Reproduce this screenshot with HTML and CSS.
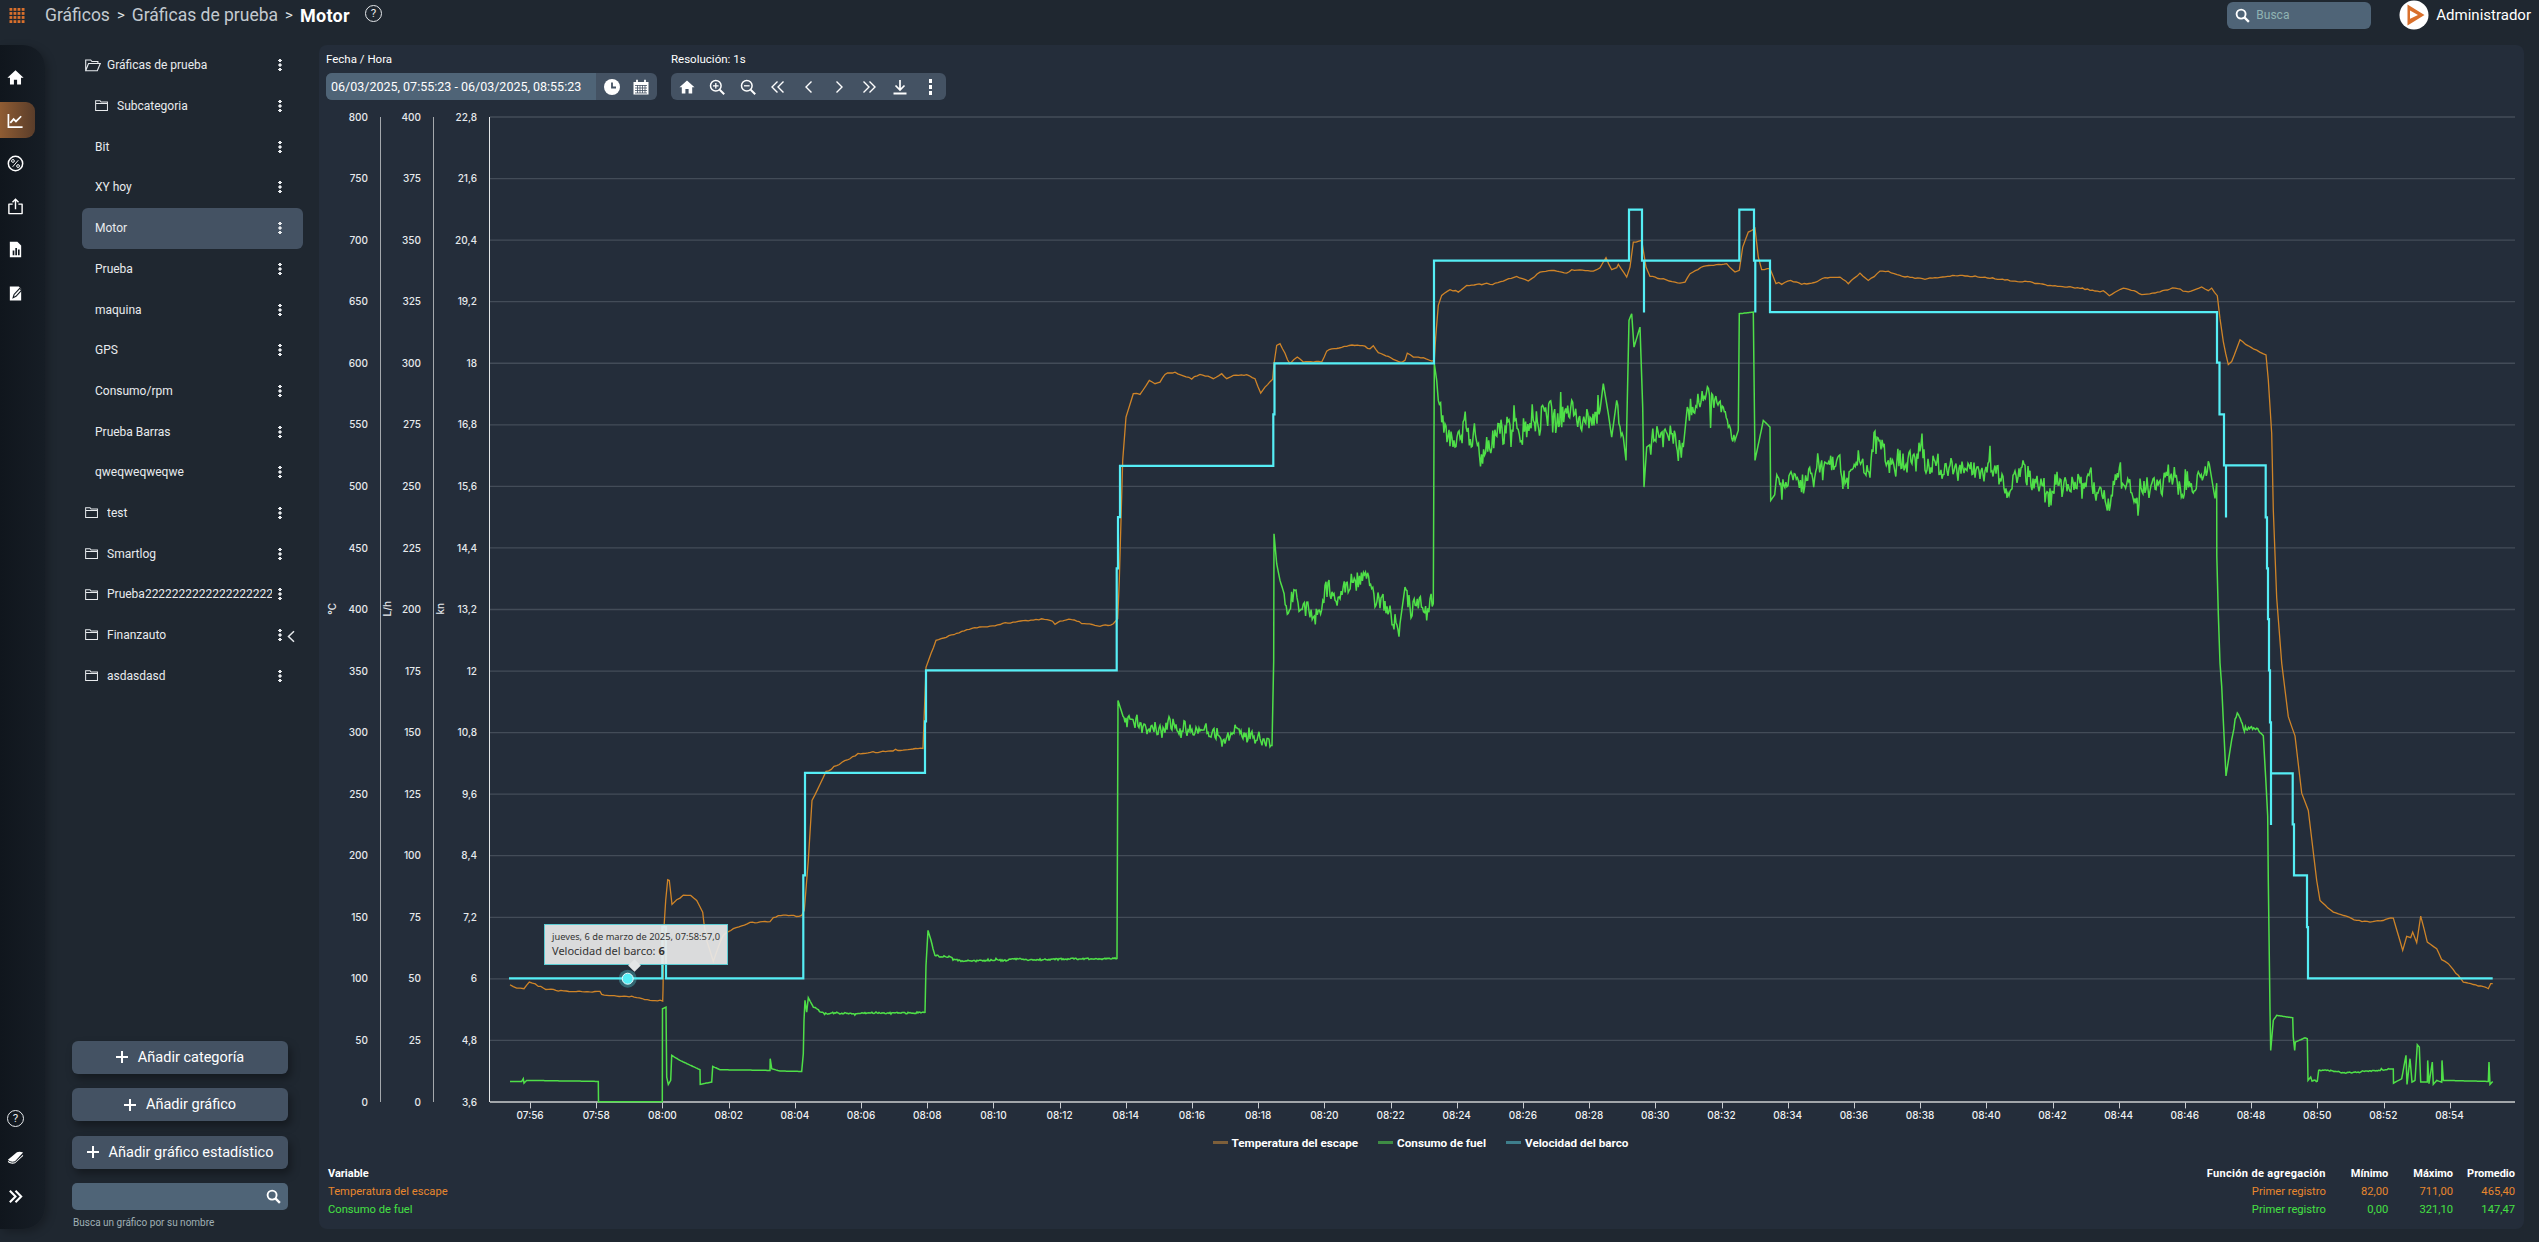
FILE: index.html
```html
<!DOCTYPE html>
<html lang="es">
<head>
<meta charset="utf-8">
<title>Motor</title>
<link rel="stylesheet" href="styles.css">
</head>
<body>
<header class="topbar">
  <svg class="apps" viewBox="0 0 16 16"><g fill="#d9702c"><rect x="0" y="0" width="3" height="3"/><rect x="4.3" y="0" width="3" height="3"/><rect x="8.6" y="0" width="3" height="3"/><rect x="13" y="0" width="3" height="3"/><rect x="0" y="4.3" width="3" height="3"/><rect x="4.3" y="4.3" width="3" height="3"/><rect x="8.6" y="4.3" width="3" height="3"/><rect x="13" y="4.3" width="3" height="3"/><rect x="0" y="8.6" width="3" height="3"/><rect x="4.3" y="8.6" width="3" height="3"/><rect x="8.6" y="8.6" width="3" height="3"/><rect x="13" y="8.6" width="3" height="3"/><rect x="0" y="13" width="3" height="3"/><rect x="4.3" y="13" width="3" height="3"/><rect x="8.6" y="13" width="3" height="3"/><rect x="13" y="13" width="3" height="3"/></g></svg>
  <nav class="crumbs">
    <span>Gráficos</span><span class="sep">&gt;</span><span>Gráficas de prueba</span><span class="sep">&gt;</span><strong>Motor</strong>
    <span class="help help-top">?</span>
  </nav>
  <div class="top-search">
    <svg class="ico-search" viewBox="0 0 16 16"><circle cx="6.5" cy="6.5" r="4.8" fill="none" stroke="#fff" stroke-width="2"/><path d="M10 10l4.8 4.8" stroke="#fff" stroke-width="2.4"/></svg>
    <span>Busca</span>
  </div>
  <svg class="logo" viewBox="0 0 30 30"><circle cx="15" cy="15" r="14.5" fill="#fff"/><path d="M8.5 4.5 L25.5 15 L8.5 25.5 V20 L19 15 L11 10.5 V19 L8.5 20 Z" fill="#d9702c"/></svg>
  <span class="user">Administrador</span>
</header>

<main class="layout">
  <aside class="rail">
    <div class="rail-group">
      <a class="rail-item"><svg viewBox="0 0 16 16"><path d="M8 1.2L.4 8.3h2.4v6.3h3.7V10.100h3v4.500h3.700V8.300h2.400z" fill="#fff"/></svg></a>
      <a class="rail-item active"><svg viewBox="0 0 18 18"><path d="M1.500 2v14h15" fill="none" stroke="#fff" stroke-width="1.800"/><path d="M3.500 11.500l3.500-4 2.500 2.500 5.500-5.500" fill="none" stroke="#fff" stroke-width="1.800"/></svg></a>
      <a class="rail-item"><svg viewBox="0 0 18 18"><circle cx="9" cy="9" r="7.600" fill="none" stroke="#fff" stroke-width="1.600"/><path d="M12 5.500l-6 7" stroke="#fff" stroke-width="1"/><circle cx="6.300" cy="6.300" r="1.500" fill="none" stroke="#fff"/><circle cx="11.700" cy="11.700" r="1.500" fill="none" stroke="#fff"/></svg></a>
      <a class="rail-item"><svg viewBox="0 0 18 18"><path d="M6 6.500H2v10h14v-10h-4" fill="none" stroke="#fff" stroke-width="1.500" stroke-linejoin="round"/><path d="M9 12V1.500M5.800 4.500L9 1.300l3.200 3.200" fill="none" stroke="#fff" stroke-width="1.500"/></svg></a>
      <a class="rail-item"><svg viewBox="0 0 18 18"><path d="M3 .8h8l4 4v12.400H3z" fill="#fff"/><path d="M6 10h1.800v5H6zM8.800 7.500h1.800V15H8.800zM11.600 9h1.800v6h-1.800z" fill="#141b22"/></svg></a>
      <a class="rail-item"><svg viewBox="0 0 18 18"><path d="M3 1.500h9.500l2.500 2.500v12.500H3z" fill="#fff"/><path d="M6.500 13.500l1-3.500 6-6.500 2 2-6 6.500zM14 1l2.500 2.500" fill="#fff" stroke="#141b22" stroke-width="1.200"/></svg></a>
    </div>
    <div class="rail-group rail-bottom">
      <a class="rail-item"><span class="help help-rail">?</span></a>
      <a class="rail-item"><svg viewBox="0 0 18 18"><path d="M1 11.500L10.500 3.500c1.500-.8 4-.8 6.500.2L8.500 13c-2.500 1-5.500.5-7.500-1.500z" fill="#fff"/><path d="M1 12.500c2 2 5 2.300 7.500 1.500L17 6v1.300L8.500 15c-2.500 1-5.500.5-7.500-1.300z" fill="#fff"/></svg></a>
      <a class="rail-item"><svg viewBox="0 0 18 18"><path d="M3 3l6 6-6 6M9 3l6 6-6 6" fill="none" stroke="#fff" stroke-width="2.200"/></svg></a>
    </div>
  </aside>

  <aside class="sidebar">
    <ul class="tree">
      <li class="row folder"><svg class="folder-ico" viewBox="0 0 16 13"><path d="M.7 11.800V1h5l1.200 1.500h6v2M.7 11.800h11.600l3-7.300H3.500z" fill="none" stroke="#e8ebee" stroke-width="1.100"/></svg><span class="name">Gráficas de prueba</span><span class="dots"></span></li>
      <li class="row sub"><svg class="folder-ico" viewBox="0 0 14 12"><path d="M.6 11.400V.8h4.800l1.100 1.400h7v9.200zM.6 3.800h12.800" fill="none" stroke="#e8ebee" stroke-width="1.100"/></svg><span class="name">Subcategoria</span><span class="dots"></span></li>
      <li class="row"><span class="name">Bit</span><span class="dots"></span></li>
      <li class="row"><span class="name">XY hoy</span><span class="dots"></span></li>
      <li class="row selected"><span class="name">Motor</span><span class="dots"></span></li>
      <li class="row"><span class="name">Prueba</span><span class="dots"></span></li>
      <li class="row"><span class="name">maquina</span><span class="dots"></span></li>
      <li class="row"><span class="name">GPS</span><span class="dots"></span></li>
      <li class="row"><span class="name">Consumo/rpm</span><span class="dots"></span></li>
      <li class="row"><span class="name">Prueba Barras</span><span class="dots"></span></li>
      <li class="row"><span class="name">qweqweqweqwe</span><span class="dots"></span></li>
      <li class="row folder"><svg class="folder-ico" viewBox="0 0 14 12"><path d="M.6 11.400V.8h4.800l1.100 1.400h7v9.200zM.6 3.800h12.800" fill="none" stroke="#e8ebee" stroke-width="1.100"/></svg><span class="name">test</span><span class="dots"></span></li>
      <li class="row folder"><svg class="folder-ico" viewBox="0 0 14 12"><path d="M.6 11.400V.8h4.800l1.100 1.400h7v9.200zM.6 3.800h12.800" fill="none" stroke="#e8ebee" stroke-width="1.100"/></svg><span class="name">Smartlog</span><span class="dots"></span></li>
      <li class="row folder"><svg class="folder-ico" viewBox="0 0 14 12"><path d="M.6 11.400V.8h4.800l1.100 1.400h7v9.200zM.6 3.800h12.800" fill="none" stroke="#e8ebee" stroke-width="1.100"/></svg><span class="name">Prueba2222222222222222222222222</span><span class="dots"></span></li>
      <li class="row folder"><svg class="folder-ico" viewBox="0 0 14 12"><path d="M.6 11.400V.8h4.800l1.100 1.400h7v9.200zM.6 3.800h12.800" fill="none" stroke="#e8ebee" stroke-width="1.100"/></svg><span class="name">Finanzauto</span><span class="dots"></span></li>
      <li class="row folder"><svg class="folder-ico" viewBox="0 0 14 12"><path d="M.6 11.400V.8h4.800l1.100 1.400h7v9.200zM.6 3.800h12.800" fill="none" stroke="#e8ebee" stroke-width="1.100"/></svg><span class="name">asdasdasd</span><span class="dots"></span></li>
    </ul>
    <svg class="collapse" viewBox="0 0 8 12"><path d="M7 .8L1.500 6 7 11.200" fill="none" stroke="#e8ebee" stroke-width="1.500"/></svg>
    <div class="tools">
      <button class="btn"><span class="plus"></span>Añadir categoría</button>
      <button class="btn"><span class="plus"></span>Añadir gráfico</button>
      <button class="btn"><span class="plus"></span>Añadir gráfico estadístico</button>
      <div class="side-search"><svg class="ico-search" viewBox="0 0 16 16"><circle cx="6.500" cy="6.500" r="4.800" fill="none" stroke="#fff" stroke-width="2"/><path d="M10 10l4.800 4.800" stroke="#fff" stroke-width="2.400"/></svg></div>
      <p class="hint">Busca un gráfico por su nombre</p>
    </div>
  </aside>

  <section class="panel">
    <div class="toolbar">
      <div class="tool-block">
        <label class="tool-label">Fecha / Hora</label>
        <div class="date-group">
          <span class="date-value">06/03/2025, 07:55:23 - 06/03/2025, 08:55:23</span>
          <span class="date-icons">
            <svg viewBox="0 0 16 16"><circle cx="8" cy="8" r="8" fill="#fff"/><path d="M8 3.500V8.500H12" fill="none" stroke="#445263" stroke-width="1.800"/></svg>
            <svg viewBox="0 0 16 16"><path d="M.5 3h15v12.500H.5z" fill="#fff"/><path d="M4 .8v3M12 .8v3" stroke="#fff" stroke-width="1.800"/><path d="M2 6.500h12M2 9h12M2 11.500h12M2 14h12M4.500 6v8M7 6v8M9.500 6v8M12 6v8" stroke="#445263" stroke-width=".8"/></svg>
          </span>
        </div>
      </div>
      <div class="tool-block">
        <label class="tool-label">Resolución: 1s</label>
        <div class="action-group">
          <svg viewBox="0 0 16 16"><path d="M8 1.500L.5 8.300h2.300v6.200h3.600V10h3.200v4.500h3.600V8.300h2.300z" fill="#fff"/></svg>
          <svg viewBox="0 0 16 16"><circle cx="6.800" cy="6.800" r="5.300" fill="none" stroke="#fff" stroke-width="1.500"/><path d="M10.700 10.700l4.500 4.500" stroke="#fff" stroke-width="2"/><path d="M4 6.800h5.600M6.800 4v5.600" stroke="#fff" stroke-width="1.300"/></svg>
          <svg viewBox="0 0 16 16"><circle cx="6.800" cy="6.800" r="5.300" fill="none" stroke="#fff" stroke-width="1.500"/><path d="M10.700 10.700l4.500 4.500" stroke="#fff" stroke-width="2"/><path d="M4 6.800h5.600" stroke="#fff" stroke-width="1.300"/></svg>
          <svg viewBox="0 0 16 16"><path d="M7.500 2.500L2 8l5.500 5.500M13.500 2.500L8 8l5.500 5.500" fill="none" stroke="#fff" stroke-width="1.400"/></svg>
          <svg viewBox="0 0 16 16"><path d="M10.500 2.500L5 8l5.500 5.500" fill="none" stroke="#fff" stroke-width="1.400"/></svg>
          <svg viewBox="0 0 16 16"><path d="M5.500 2.500L11 8l-5.500 5.500" fill="none" stroke="#fff" stroke-width="1.400"/></svg>
          <svg viewBox="0 0 16 16"><path d="M2.500 2.500L8 8l-5.500 5.500M8.500 2.500L14 8l-5.500 5.500" fill="none" stroke="#fff" stroke-width="1.400"/></svg>
          <svg viewBox="0 0 16 16"><path d="M8 1v9M3.500 6.500L8 11l4.500-4.500" fill="none" stroke="#fff" stroke-width="1.700"/><path d="M1.500 14.500h13" stroke="#fff" stroke-width="2"/></svg>
          <span class="dots dots-lg"></span>
        </div>
      </div>
    </div>

    <div class="chart">
      <div class="axis">
        <span class="unit">°C</span>
        <div class="ticks"><span>800</span><span>750</span><span>700</span><span>650</span><span>600</span><span>550</span><span>500</span><span>450</span><span>400</span><span>350</span><span>300</span><span>250</span><span>200</span><span>150</span><span>100</span><span>50</span><span>0</span></div>
        <i class="axis-line"></i>
      </div>
      <div class="axis">
        <span class="unit">L/h</span>
        <div class="ticks"><span>400</span><span>375</span><span>350</span><span>325</span><span>300</span><span>275</span><span>250</span><span>225</span><span>200</span><span>175</span><span>150</span><span>125</span><span>100</span><span>75</span><span>50</span><span>25</span><span>0</span></div>
        <i class="axis-line"></i>
      </div>
      <div class="axis axis-main">
        <span class="unit">kn</span>
        <div class="ticks"><span>22,8</span><span>21,6</span><span>20,4</span><span>19,2</span><span>18</span><span>16,8</span><span>15,6</span><span>14,4</span><span>13,2</span><span>12</span><span>10,8</span><span>9,6</span><span>8,4</span><span>7,2</span><span>6</span><span>4,8</span><span>3,6</span></div>
        <i class="axis-line"></i>
      </div>
      <div class="plot">
        <svg id="plot" class="plot-svg" viewBox="490 110.6 2025 997"></svg>
        <div class="tooltip">
          <div class="tip-date">jueves, 6 de marzo de 2025, 07:58:57,0</div>
          <div class="tip-value">Velocidad del barco: <b>6</b></div>
        </div>
      </div>
    </div>

    <div class="xlabels"><span>07:56</span><span>07:58</span><span>08:00</span><span>08:02</span><span>08:04</span><span>08:06</span><span>08:08</span><span>08:10</span><span>08:12</span><span>08:14</span><span>08:16</span><span>08:18</span><span>08:20</span><span>08:22</span><span>08:24</span><span>08:26</span><span>08:28</span><span>08:30</span><span>08:32</span><span>08:34</span><span>08:36</span><span>08:38</span><span>08:40</span><span>08:42</span><span>08:44</span><span>08:46</span><span>08:48</span><span>08:50</span><span>08:52</span><span>08:54</span></div>

    <div class="legend">
      <span class="legend-item"><i class="swatch sw-temp"></i>Temperatura del escape</span>
      <span class="legend-item"><i class="swatch sw-fuel"></i>Consumo de fuel</span>
      <span class="legend-item"><i class="swatch sw-speed"></i>Velocidad del barco</span>
    </div>

    <table class="stats">
      <thead><tr><th class="var">Variable</th><th>Función de agregación</th><th>Mínimo</th><th>Máximo</th><th>Promedio</th></tr></thead>
      <tbody>
        <tr class="c-temp"><td class="var">Temperatura del escape</td><td>Primer registro</td><td>82,00</td><td>711,00</td><td>465,40</td></tr>
        <tr class="c-fuel"><td class="var">Consumo de fuel</td><td>Primer registro</td><td>0,00</td><td>321,10</td><td>147,47</td></tr>
      </tbody>
    </table>
  </section>
</main>
<script src="chart.js"></script>
</body>
</html>
```
FILE: styles.css
```css
* { box-sizing: border-box; }
html, body { margin: 0; height: 100%; }
body {
  width: 2539px;
  height: 1242px;
  overflow: hidden;
  background: #1f2730;
  color: #fff;
  font-family: Roboto, "Noto Sans", sans-serif;
  display: flex;
  flex-direction: column;
}

/* top bar */
.topbar {
  height: 45px;
  flex: none;
  display: flex;
  align-items: center;
  padding: 0 8px 15px 9px;
}
.apps { width: 16px; height: 15px; flex: none; }
.crumbs {
  display: flex;
  align-items: center;
  margin-left: 20px;
  font-size: 17.5px;
  color: #c3cad0;
}
.crumbs .sep { margin: 0 7px; font-size: 15px; color: #dfe3e6; }
.crumbs strong { color: #fff; font-weight: 700; font-size: 18px; letter-spacing: .3px; }
.help {
  display: inline-flex;
  align-items: center;
  justify-content: center;
  width: 17px;
  height: 17px;
  border: 1.2px solid #e6e9ec;
  border-radius: 50%;
  font-size: 11.5px;
  color: #e6e9ec;
  line-height: 1;
}
.help-top { margin-left: 15px; margin-top: -3px; }
.help-rail { width: 17px; height: 17px; }
.top-search {
  margin-left: auto;
  width: 144px;
  height: 27px;
  background: #4f6477;
  border-radius: 6px;
  display: flex;
  align-items: center;
  gap: 6px;
  padding-left: 8px;
  font-size: 12px;
  color: #8fb3b3;
}
.ico-search { width: 15px; height: 15px; flex: none; }
.logo { width: 30px; height: 30px; margin-left: 28px; flex: none; }
.user { margin-left: 7px; font-size: 15px; color: #fff; white-space: nowrap; }

/* layout */
.layout {
  flex: none;
  display: flex;
  height: 1184px;
}

/* rail */
.rail {
  width: 45px;
  flex: none;
  display: flex;
  flex-direction: column;
  justify-content: space-between;
  background: linear-gradient(90deg, #10161d, #161d25);
  border-radius: 0 22px 22px 0;
  box-shadow: 3px 3px 8px rgba(0, 0, 0, .25);
}
.rail-group { padding-top: 10.500px; }
.rail-bottom { padding-top: 0; padding-bottom: 13px; }
.rail-item {
  width: 35px;
  height: 43.200px;
  display: flex;
  align-items: center;
  justify-content: center;
  padding-right: 4px;
}
.rail-bottom .rail-item { height: 39px; }
.rail-item svg { width: 17px; height: 17px; }
.rail-item.active {
  height: 36px;
  margin: 3.600px 0;
  border-radius: 0 9px 9px 0;
  background: linear-gradient(90deg, #8f5c33, #5a3d2a);
}

/* sidebar */
.sidebar {
  width: 274px;
  flex: none;
  position: relative;
  display: flex;
  flex-direction: column;
  justify-content: space-between;
}
.tree { list-style: none; margin: 0; padding: 0 16px 0 37px; }
.row {
  height: 40.670px;
  display: flex;
  align-items: center;
  padding: 0 15px 0 13px;
  font-size: 12px;
  color: #e8ebee;
  border-radius: 6px;
}
.row.folder { padding-left: 3px; }
.row.sub { padding-left: 13px; }
.row.selected { background: #445263; height: 41px; }
.folder-ico { width: 13px; height: 11px; margin-right: 9px; flex: none; }
.row.folder:first-child .folder-ico { width: 16px; height: 13px; margin-right: 6px; }
.name { flex: 1; min-width: 0; overflow: hidden; white-space: nowrap; }
.dots {
  flex: none;
  width: 16px;
  height: 12px;
  background:
    radial-gradient(circle 1.600px at 50% 1.600px, #e8ebee 98%, transparent),
    radial-gradient(circle 1.600px at 50% 6px, #e8ebee 98%, transparent),
    radial-gradient(circle 1.600px at 50% 10.400px, #e8ebee 98%, transparent);
}
.dots-lg {
  width: 17px;
  height: 16px;
  background:
    radial-gradient(circle 2px at 50% 2px, #fff 98%, transparent),
    radial-gradient(circle 2px at 50% 8px, #fff 98%, transparent),
    radial-gradient(circle 2px at 50% 14px, #fff 98%, transparent);
}
.collapse { position: absolute; left: 242px; top: 585px; width: 8px; height: 13px; }
.tools {
  margin-left: 27px;
  width: 216px;
  display: flex;
  flex-direction: column;
  gap: 14.500px;
}
.btn {
  height: 33px;
  border: 0;
  border-radius: 6px;
  background: #445263;
  color: #fff;
  font: 400 14.500px Roboto, sans-serif;
  display: flex;
  align-items: center;
  justify-content: center;
  box-shadow: 3px 5px 9px rgba(0, 0, 0, .35);
}
.plus {
  width: 12px;
  height: 12px;
  margin-right: 10px;
  background:
    linear-gradient(#fff, #fff) center / 100% 2px no-repeat,
    linear-gradient(#fff, #fff) center / 2px 100% no-repeat;
}
.side-search {
  height: 27px;
  border-radius: 5px;
  background: #4f6477;
  display: flex;
  align-items: center;
  justify-content: flex-end;
  padding-right: 7px;
}
.hint { margin: -7.500px 0 0 1px; height: 12px; line-height: 12px; font-size: 10px; color: #9fb0b5; }

/* panel */
.panel {
  width: 2205px;
  flex: none;
  display: flex;
  flex-direction: column;
  padding: 7px 9px 0 7px;
  background: #242d3a;
  border-radius: 8px;
}
.toolbar { display: flex; gap: 14px; }
.tool-block { display: flex; flex-direction: column; gap: 7px; }
.tool-label { height: 14px; line-height: 14px; font-size: 11.500px; color: #fff; }
.date-group {
  width: 331px;
  height: 27px;
  display: flex;
  border-radius: 6px;
  overflow: hidden;
  background: #445263;
}
.date-value {
  width: 270px;
  flex: none;
  background: #4f6477;
  padding-left: 5px;
  line-height: 27px;
  font-size: 12.500px;
  white-space: nowrap;
}
.date-icons { flex: 1; display: flex; align-items: center; justify-content: space-around; padding: 0 1px; }
.date-icons svg { width: 16px; height: 16px; }
.action-group {
  width: 275px;
  height: 27px;
  display: flex;
  align-items: center;
  justify-content: space-between;
  padding: 0 7px 0 8px;
  border-radius: 6px;
  background: #445263;
}
.action-group svg { width: 16px; height: 16px; }

.chart { display: flex; height: 997px; margin-top: 10.600px; flex: none; }
.axis { display: flex; width: 53px; flex: none; }
.axis:first-child { width: 55px; }
.axis-main { width: 56px; }
.unit {
  width: 20px;
  flex: none;
  align-self: center;
  writing-mode: vertical-rl;
  transform: rotate(180deg);
  text-align: center;
  font: 500 10px Inter, sans-serif;
  color: #e6e9ec;
}
.ticks {
  flex: 1;
  display: flex;
  flex-direction: column;
  justify-content: space-between;
  align-items: flex-end;
  padding-right: 12px;
  font: 500 10px/12px Inter, sans-serif;
  color: #e6e9ec;
}
.axis-line { flex: none; width: 1px; margin: 6px 0 5.500px; background: #a4a8ac; }
.axis-main .axis-line { background: #e3e6e8; }
.plot { position: relative; flex: 1; }
.plot-svg { display: block; width: 100%; height: 100%; overflow: visible; }
.tooltip {
  position: absolute;
  left: 54px;
  top: 813.400px;
  width: 184px;
  height: 41px;
  padding: 5px 7px;
  background: rgba(232, 232, 232, .93);
  border: 1px solid #5ccbd2;
  color: #333;
  font-family: "Noto Sans", Roboto, sans-serif;
}
.tooltip::after {
  content: "";
  position: absolute;
  left: 85px;
  bottom: -6px;
  width: 9px;
  height: 9px;
  background: #e4e5e6;
  transform: rotate(45deg);
}
.tip-date { font-size: 9.300px; line-height: 13px; white-space: nowrap; }
.tip-value { font-size: 11px; line-height: 15px; white-space: nowrap; }

.xlabels {
  display: grid;
  grid-template-columns: repeat(30, 66.200px);
  justify-items: center;
  margin-left: 171px;
  height: 14px;
  font: 500 10px/14px Inter, sans-serif;
  color: #eef0f2;
}

.legend {
  display: flex;
  justify-content: center;
  gap: 20px;
  margin-top: 14px;
  height: 14px;
  font-size: 11.700px;
  line-height: 14px;
  font-weight: 700;
}
.legend-item { display: flex; align-items: center; gap: 4px; }
.swatch { width: 15px; height: 3px; }
.sw-temp { background: #7d5f3a; }
.sw-fuel { background: #3e8c44; }
.sw-speed { background: #3e7e8c; }

.stats {
  margin-top: 15px;
  width: 100%;
  border-collapse: collapse;
  font-size: 11.200px;
}
.stats th, .stats td { height: 18px; padding: 0; text-align: right; font-weight: 400; white-space: nowrap; }
.stats th { font-weight: 700; font-size: 11px; }
.stats th:nth-child(2) { letter-spacing: .33px; }
.stats tr > :nth-child(3) { padding-left: 25px; }
.stats tr > :nth-child(4) { padding-left: 25px; }
.stats tr > :nth-child(5) { padding-left: 14px; }
.stats .var { width: 100%; text-align: left; padding-left: 2px; }
.c-temp { color: #e8872e; }
.c-fuel { color: #45e043; }
```
FILE: chart.js
```js
(function () {
  var NS = 'http://www.w3.org/2000/svg';
  var svg = document.getElementById('plot');

  function el(name, attrs) {
    var n = document.createElementNS(NS, name);
    for (var k in attrs) n.setAttribute(k, attrs[k]);
    svg.appendChild(n);
    return n;
  }

  // seeded random so every render is identical
  var seed = 20250306;
  function rnd() {
    seed = (seed * 1664525 + 1013904223) % 4294967296;
    return seed / 4294967296;
  }

  // convert traced crop coordinates to page pixels
  function crop(ox, oy, sx, sy, list) {
    var out = [];
    for (var i = 0; i < list.length; i += 2) out.push([ox + list[i] / sx, oy + list[i + 1] / sy]);
    return out;
  }

  function amp(zones, x) {
    for (var i = 0; i < zones.length; i++) if (x >= zones[i][0] && x <= zones[i][1]) return zones[i];
    return null;
  }

  function build(points, zones, step) {
    var d = [], lastLow = 0;
    for (var i = 0; i < points.length; i++) {
      var p = points[i];
      if (i > 0) {
        var q = points[i - 1], dx = p[0] - q[0];
        var n = Math.floor(dx / step);
        var steep = Math.abs(p[1] - q[1]) / Math.max(dx, .01);
        if (n > 1 && steep < 6) {
          for (var j = 1; j < n; j++) {
            var t = j / n, x = q[0] + dx * t, y = q[1] + (p[1] - q[1]) * t;
            var z = amp(zones, x);
            if (z) {
              lastLow = lastLow * .8 + (rnd() - .5) * z[2] * .7;
              var spike = rnd() > .88 ? (rnd() - .5) * z[2] * 1.8 : 0;
              y += lastLow + (rnd() - .5) * z[2] * .9 + spike;
            }
            d.push(x.toFixed(1) + ' ' + y.toFixed(1));
          }
        }
      }
      d.push(p[0].toFixed(1) + ' ' + p[1].toFixed(1));
    }
    return 'M' + d.join('L');
  }

  // grid
  var TOP = 116.6, STEP = 61.56;
  for (var g = 0; g < 16; g++) {
    el('line', { x1: 490, x2: 2515, y1: TOP + g * STEP, y2: TOP + g * STEP, stroke: '#434c58', 'stroke-width': 1.3 });
  }
  el('line', { x1: 490, x2: 2515, y1: 1101.5, y2: 1101.5, stroke: '#a2a6aa', 'stroke-width': 2 });
  for (var k = 0; k < 30; k++) {
    var tx = Math.round(530 + 66.2 * k) + .5;
    el('line', { x1: tx, x2: tx, y1: 1102, y2: 1108, stroke: '#c9ccd0', 'stroke-width': 1 });
  }

  // temperature
  var temp = [].concat(
    crop(480, 860, 3, 3, [90,373,110,383,132,385,148,365,175,378,205,387,235,392,360,393,365,402,410,407,470,412,510,420,548,422,549,390,552,200,557,120,563,58,568,60,576,132,590,118,610,104,632,105,650,120,668,155,672,190,680,240,700,303,715,260,730,225,760,205,810,186,870,184,880,172,910,164,965,165,973,150,985,0]),
    [[812,800],[826,771],[858,753],[923,748],[926,667],[936,640],[972,628],[1036,619]],
    crop(1050, 320, 3, 3, [0,900,15,912,30,902,65,898,95,910,150,918,190,910,203,895,208,780,218,420,228,290,250,220,270,222,298,180,315,190,330,185,345,162,375,155,425,176,450,162,490,175,515,160,530,175,550,165,590,163,615,175,632,218,645,200,668,176,672,130,680,75,690,70,720,130,742,110,760,125,790,125,815,125,830,92,890,78,930,76,960,85,970,76,985,97,1045,123]),
    crop(1400, 180, 3, 3, [0,545,15,540,22,518,40,530,70,532,95,542,103,540,107,470,115,375,125,345,150,328,175,335,200,315,260,308,270,312,350,288,385,302,420,275,455,270,500,278,515,268,580,272,600,262,618,232,635,268,650,262,655,252,680,290,690,260,700,185,725,180,738,260,750,288,790,295,825,305,855,305,870,280,910,258,980,250,1005,275,1018,270,1028,200,1045,155,1065,143,1075,230,1085,268,1110,265,1128,310,1145,312,1172,300,1205,312,1235,308,1275,292,1320,290,1345,310,1380,278,1405,300,1440,272,1465,272,1500,285]),
    [[1925,279],[1960,275],[2000,279],[2050,285],[2080,288]],
    crop(2100, 280, 3, 2.613, [0,30,10,27,28,40,70,20,110,30,125,37,165,33,225,20,265,30,305,17,325,27,335,20,352,40,360,100,370,160,385,220,395,212,420,155,470,182,498,195,505,260,515,400,520,600,530,830,545,1000,565,1140,585,1190,605,1340,625,1385,650,1568]),
    crop(2100, 860, 3, 3, [660,120,700,155,770,180,810,185,880,173,908,270,920,228,932,232,938,215,950,247,962,167,982,245,1010,265,1025,298,1045,310,1090,365,1165,385,1172,370,1178,370])
  );
  el('path', { d: build(temp, [[500, 2500, 1]], 2.5), fill: 'none', stroke: '#cf8428', 'stroke-width': 1.3 });

  // fuel
  var fuel = [].concat(
    crop(480, 860, 3, 3, [90,663,125,663,130,655,132,668,140,660,355,663,355.5,724,547,724,547.5,445,558,440,560,650,565,672,572,660,575,585,600,600,660,628,660.5,672,695,665,698,618,720,628,870,630,870.5,595,875,625,900,632,965,633,970,580,972,480,975,420,980,455,985,412,1000,440,1040,460,1200,458]),
    [[925,1012],[926,965],[928,930],[935,955],[960,960],[1117,958],[1118,700],[1125,722],[1180,728],[1240,733],[1262,745],[1272,745]],
    crop(1050, 320, 3, 3, [671,1020,672,640,680,730,690,780,718,870,735,810,750,870,770,845,790,890,805,870,825,795,840,825,925,800,965,805,975,860,1050,910,1065,800,1080,860,1130,900,1150,850]),
    crop(1400, 180, 3, 3, [103,550,110,600,115,660,135,730,165,800,220,760,260,770,300,760,345,720,380,770,400,720,440,710,530,720,545,750,570,710,600,690,610,610,625,700,635,770,650,660,670,770,678,840,687,420,695,400,702,500,720,440,728,680,732,920,740,800,780,770,820,790,850,800,862,680,900,680,935,640,970,680,985,740,1005,780,1015,750,1018,400,1060,395,1065,840,1090,720,1110,740,1112,960,1170,880,1220,900,1265,840,1310,840,1335,910,1375,810,1395,880,1440,780,1465,840,1500,810]),
    [[1950,465],[2000,478],[2050,488]],
    crop(2100, 280, 3, 2.613, [0,540,25,570,55,515,105,570,150,550,220,520,250,570,295,500,328,480,345,570,350,530,350.5,720,355,870,360,1000,365,1060,370,1150,378,1295,395,1200,412,1130,430,1170,470,1170,490,1190,497,1300,503,1400,505,1568]),
    crop(2100, 860, 3, 3, [510,450,512,570,520,480,530,465,578,472,580,530,584,570,586,545,615,532,622,535,624,660,632,650,636,662,652,662,656,630,680,630,730,637,880,626,880.5,668,905,655,918,585,921,672,930,595,936,665,945,660,952,553,958,560,962,665,982,665,983,600,987,670,997,605,1000,672,1010,660,1025,665,1026,600,1030,660,1165,663,1167,605,1170,672,1178,663])
  );
  el('path', {
    d: build(fuel, [[815, 1116, 1.5], [1124, 1270, 12], [1285, 1432, 17], [1440, 1625, 22], [1650, 1735, 22], [1775, 2215, 19], [2235, 2262, 4], [2310, 2392, 1]], 1),
    fill: 'none', stroke: '#4fdf48', 'stroke-width': 1.5
  });

  // ship speed
  var speed = [[509,978],[662.3,978],[662.3,926.7],[666,926.7],[666,978],[803.3,978],[803.3,875],[805,875],[805,772.5],[925,772.5],[925,721],[926,721],[926,670],[1116.7,670],[1116.7,568],[1118,568],[1118,516.7],[1120,516.7],[1120,465.5],[1273.3,465.5],[1273.3,414],[1274.5,414],[1274.5,363],[1434,363],[1434,260.3],[1629,260.3],[1629,209.3],[1642,209.3],[1642,260.3],[1644,260.3],[1644,312],[1644,260.3],[1739.3,260.3],[1739.3,209.3],[1754,209.3],[1754,260.3],[1755.3,260.3],[1755.3,312],[1755.3,260.3],[1770,260.3],[1770,311.8],[2217,311.8],[2217,362.3],[2219.5,362.3],[2219.5,414],[2224,414],[2224,465],[2226,465],[2226,517],[2226,465],[2265.7,465],[2265.7,517],[2267,517],[2267,568],[2268,568],[2268,618.7],[2269,618.7],[2269,670],[2270,670],[2270,722],[2271,722],[2271,773],[2271,824.6],[2271,773],[2292.7,773],[2292.7,824],[2294,824],[2294,875],[2307,875],[2307,926.7],[2308,926.7],[2308,978],[2492.7,978]];
  el('path', { d: 'M' + speed.map(function (p) { return p.join(' '); }).join('L'), fill: 'none', stroke: '#55eef5', 'stroke-width': 2.2 });

  // hovered point
  el('circle', { cx: 627.7, cy: 978.3, r: 9, fill: '#55eef5', 'fill-opacity': .3 });
  el('circle', { cx: 627.7, cy: 978.3, r: 5.5, fill: '#55eef5', stroke: '#e9fdff', 'stroke-width': 1 });
})();
```
